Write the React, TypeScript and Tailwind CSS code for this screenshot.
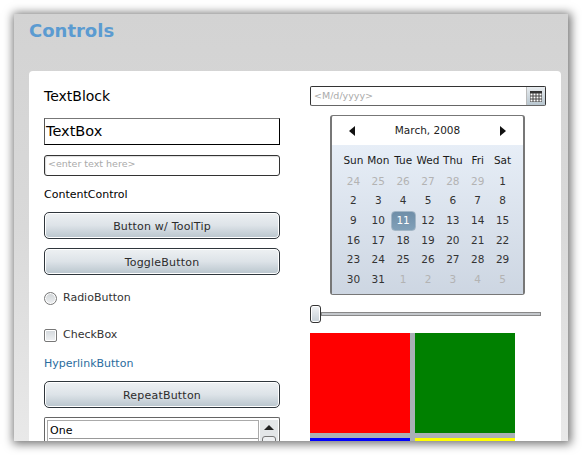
const days = [
  ["24","25","26","27","28","29","1"],
  ["2","3","4","5","6","7","8"],
  ["9","10","11","12","13","14","15"],
  ["16","17","18","19","20","21","22"],
  ["23","24","25","26","27","28","29"],
  ["30","31","1","2","3","4","5"],
];
const names = ["Sun","Mon","Tue","Wed","Thu","Fri","Sat"];

function Btn({ label }: { label: string }) {
  return (
    <div className="h-[27px] shrink-0 rounded-[5px] border border-[#2f363c] bg-gradient-to-b from-[#eef1f3] via-[#dde3e8] to-[#b9c5cd] flex items-center justify-center pt-[3px] text-[11px] text-[#2c2c2c] tracking-[0.2px] shadow-[inset_0_0_0_1px_#ffffff]">
      {label}
    </div>
  );
}

export default function App() {
  return (
    <div className="w-[582px] h-[455px] bg-white overflow-hidden pt-[14px] pl-[14px] font-['DejaVu_Sans',sans-serif]">
      <div className="w-[554px] h-[427px] bg-gradient-to-b from-[#d3d3d3] via-[#d9d9d9] to-[#e9e9e9] shadow-[1px_1px_9px_2px_rgba(0,0,0,0.55)] flex flex-col overflow-hidden pl-[15px] pr-[7px]">
        <div className="h-[57px] shrink-0 pt-[4px] text-[18px] leading-[26px] font-bold text-[#5b9bd1]">Controls</div>
        <div className="flex-1 bg-white rounded-t-[4px] flex gap-[30px] pl-[15px] pt-[15px] overflow-hidden">
          <div className="w-[236px] shrink-0 flex flex-col">
            <div className="h-[20px] text-[14px] leading-[20px] text-black">TextBlock</div>
            <div className="mt-[12px] h-[27px] shrink-0 border border-black border-t-[#777] border-l-[#555] px-px text-[14.5px] leading-[24px] text-black">TextBox</div>
            <div className="mt-[10px] h-[21px] shrink-0 rounded-[3px] border border-[#333] shadow-[inset_1px_1px_1px_#ddd] px-[3px] text-[9.5px] leading-[16px] text-[#aaa]">&lt;enter text here&gt;</div>
            <div className="mt-[11px] h-[16px] text-[11px] leading-[16px] text-black">ContentControl</div>
            <div className="mt-[9px]"><Btn label="Button w/ ToolTip" /></div>
            <div className="mt-[9px]"><Btn label="ToggleButton" /></div>
            <div className="mt-[16px] h-[14px] flex items-center gap-[6px] text-[11px] text-[#333]">
              <span className="w-[13px] h-[13px] rounded-full border border-[#777] bg-gradient-to-b from-[#cfd3d6] to-[#eef0f2] shadow-[inset_0_0_0_1px_#fff]" />
              RadioButton
            </div>
            <div className="mt-[23px] h-[14px] flex items-center gap-[6px] text-[11px] text-[#333]">
              <span className="w-[13px] h-[13px] rounded-[2px] border border-[#777] bg-gradient-to-b from-[#d3d8dc] to-[#f0f2f4] shadow-[inset_0_0_0_1px_#fff]" />
              CheckBox
            </div>
            <div className="mt-[15px] h-[14px] text-[11px] leading-[14px] text-[#2a6c9e]">HyperlinkButton</div>
            <div className="mt-[10px]"><Btn label="RepeatButton" /></div>
            <div className="mt-[9px] h-[40px] shrink-0 rounded-t-[2px] border border-[#666] border-b-0 flex p-[2px] pr-[1px]">
              <div className="flex-1 border border-[#aaa] border-b-0 pl-[1px]">
                <div className="h-[18px] border-b border-[#999] px-[1px] text-[11px] leading-[20px] text-black">One</div>
              </div>
              <div className="w-[18px] ml-px flex flex-col items-center bg-[#e3e6e8]">
                <svg width="10" height="16" viewBox="0 0 10 16" className="shrink-0"><path d="M0 10 L5 5 L10 10 Z" fill="#222" /></svg>
                <div className="w-[14px] h-[12px] rounded-t-[3px] border border-[#777] bg-[#eef0f2]" />
              </div>
            </div>
          </div>

          <div className="w-[236px] shrink-0 flex flex-col">
            <div className="h-[20px] shrink-0 rounded-[2px] border border-[#333] border-b-[#666] flex text-[9.5px] leading-[17px] text-[#aaa]">
              <div className="flex-1 px-[3px]">&lt;M/d/yyyy&gt;</div>
              <div className="w-[19px] shrink-0 border-l border-[#bbb] bg-gradient-to-b from-[#e8ecef] to-[#b8c6cf] flex items-center justify-center">
                <svg width="12" height="11" viewBox="0 0 12 11">
                  <rect x="0" y="0" width="12" height="11" fill="#fff" stroke="#444" />
                  <rect x="0" y="0" width="12" height="2.5" fill="#333" />
                  <path d="M3 2V11M6 2V11M9 2V11M0 5H12M0 8H12" stroke="#444" strokeWidth="1" />
                </svg>
              </div>
            </div>
            <div className="ml-[20px] mt-[9px] w-[195px] h-[180px] shrink-0 rounded-[3px] border border-[#777] border-x-2 flex flex-col bg-white">
              <div className="h-[29px] shrink-0 flex items-center justify-between pl-[17px] pr-[17px] text-[10.5px] text-[#222]">
                <svg width="6" height="10" viewBox="0 0 6 10"><path d="M6 0V10L0 5Z" fill="#111" /></svg>
                <span>March, 2008</span>
                <svg width="6" height="10" viewBox="0 0 6 10"><path d="M0 0V10L6 5Z" fill="#111" /></svg>
              </div>
              <div className="flex-1 bg-gradient-to-b from-[#e7eef7] to-[#cdd6e2] pl-[9px] pr-[8px] pt-[6px] grid grid-cols-7 grid-rows-[20.7px] auto-rows-[19.7px] text-[10.5px] text-[#333]">
                {names.map((n) => (
                  <div key={n} className="flex items-center justify-center text-[10.5px] text-[#1a1a1a]">{n}</div>
                ))}
                {days.map((row, r) =>
                  row.map((d, c) => {
                    const muted = (r === 0 && c < 6) || (r === 5 && c > 1);
                    const sel = r === 2 && c === 2;
                    return (
                      <div key={`${r}-${c}`} className={sel ? "flex items-center justify-center rounded-[4px] bg-gradient-to-b from-[#6f8ea8] to-[#81a0b8] text-white border border-[#a3b6c6]" : muted ? "flex items-center justify-center text-[#b3b3b3]" : "flex items-center justify-center"}>
                        {d}
                      </div>
                    );
                  })
                )}
              </div>
            </div>
            <div className="mt-[10px] h-[18px] shrink-0 flex items-center">
              <div className="w-[11px] h-[18px] shrink-0 rounded-[3px] border border-[#333] bg-gradient-to-b from-[#f2f4f6] to-[#c6cfd6] shadow-[inset_0_0_0_1px_#fff]" />
              <div className="w-[220px] h-[4px] border border-[#888] bg-[#c4c8cc]" />
            </div>
            <div className="mt-[10px] w-[205px] shrink-0 grid grid-cols-[100px_5px_100px] grid-rows-[100px_5px_10px] bg-[#a9b0b6]">
              <div className="bg-[#ff0000]" />
              <div />
              <div className="bg-[#008000]" />
              <div />
              <div />
              <div />
              <div className="bg-[#0000ff]" />
              <div />
              <div className="bg-[#ffff00]" />
            </div>
          </div>
        </div>
      </div>
    </div>
  );
}
